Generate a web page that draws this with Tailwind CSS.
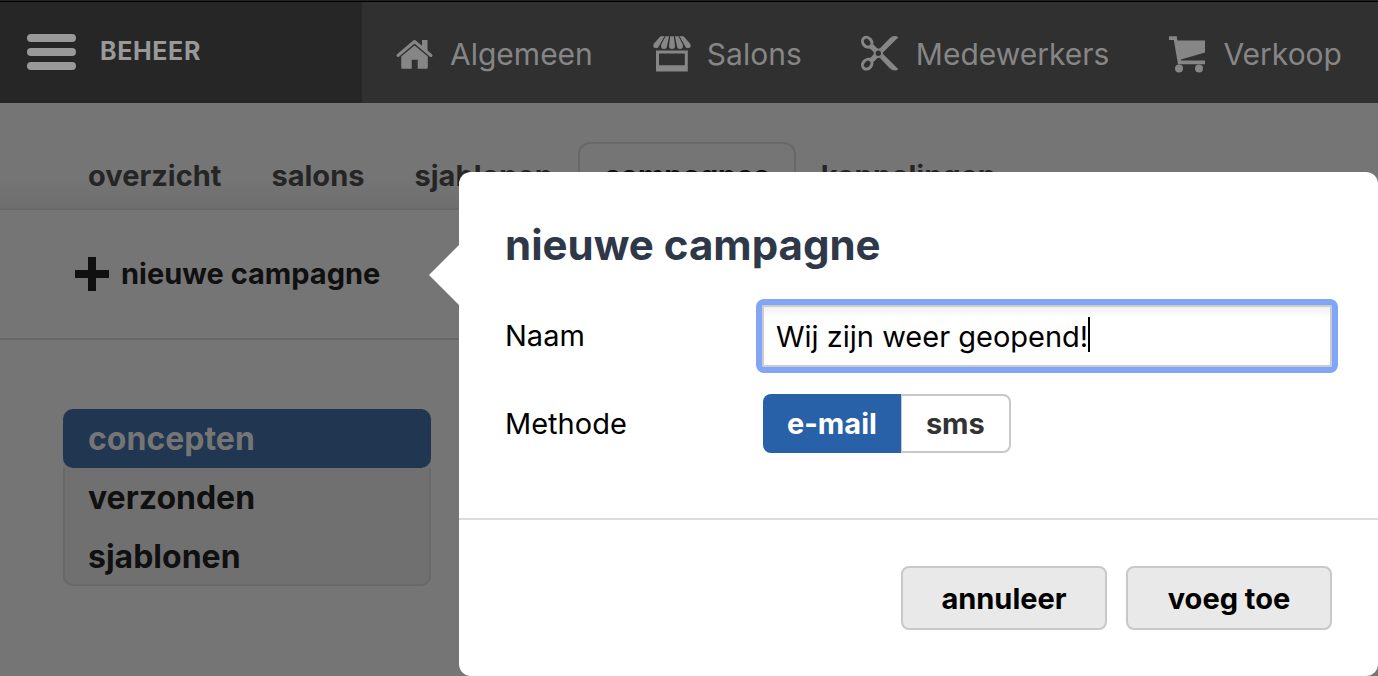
<!DOCTYPE html>
<html lang="nl">
  <head>
    <meta charset="UTF-8" />
    <meta name="viewport" content="width=device-width, initial-scale=1.0" />
    <title>Beheer - campagnes</title>
    <script src="https://cdn.jsdelivr.net/npm/@tailwindcss/browser@4"></script>
  </head>
  <body class="relative min-h-screen overflow-x-hidden bg-[#757575] font-['Inter',sans-serif] text-[#101010]">
    <header class="flex h-[103px] border-t border-[#222222] bg-[#303030] text-[#868686]">
      <div class="flex w-[362px] shrink-0 items-center gap-6 border-t border-black bg-[#262626] pb-[2px] pl-[27px]">
        <button type="button" aria-label="Menu" class="flex flex-col gap-[6px]">
          <span class="h-2 w-[49px] rounded-full bg-[#999999]"></span>
          <span class="h-2 w-[49px] rounded-full bg-[#999999]"></span>
          <span class="h-2 w-[49px] rounded-full bg-[#999999]"></span>
        </button>
        <span class="text-[25px] font-bold tracking-wide text-[#999999]">BEHEER</span>
      </div>
      <nav class="flex grow items-center justify-between border-t border-black pt-1 pr-9 pl-8 text-[30px] whitespace-nowrap">
        <a href="#" class="flex items-center gap-4">
          <svg class="h-10 w-10" viewBox="0 0 40 40" fill="currentColor">
            <path d="M4 20.500 20.500 6.500 37 20.500" fill="none" stroke="currentColor" stroke-width="3" stroke-linecap="round" stroke-linejoin="round" />
            <path d="M28 5h5.500v12L28 12.500z" />
            <path d="M7.200 21.500 20.500 10.500l13.300 11v11a1.200 1.200 0 0 1-1.200 1.200H23.700v-9h-6v9H8.400a1.200 1.200 0 0 1-1.200-1.200z" />
          </svg>
          Algemeen
        </a>
        <a href="#" class="flex items-center gap-4">
          <svg class="h-10 w-10" viewBox="0 0 40 40" fill="currentColor">
            <path d="M9.500 1.200h4L8 11a3 3 0 0 1-5.800 0q0-1.500 1-2.800z" />
            <path d="M14.600 1.200h3.500L16 11a3 3 0 0 1-6 0q0-1 .5-2z" />
            <path d="M19.200 1.200h3.600L24 11a3 3 0 0 1-6 0z" />
            <path d="M27.400 1.200h-3.500L26 11a3 3 0 0 0 6 0q0-1-.5-2z" />
            <path d="M32.500 1.200h-4L34 11a3 3 0 0 0 5.800 0q0-1.500-1-2.800z" />
            <path d="M5 15.500h31.800v21H5zM8 18.500v11.700h25.800V18.500z" fill-rule="evenodd" />
          </svg>
          Salons
        </a>
        <a href="#" class="flex items-center gap-4">
          <svg class="h-10 w-10" viewBox="0 0 40 40" fill="currentColor">
            <g fill="none" stroke="currentColor" stroke-width="3">
              <ellipse cx="7.200" cy="7.200" rx="4.300" ry="5.300" transform="rotate(-40 7.200 7.200)" />
              <ellipse cx="7.200" cy="29.200" rx="4.300" ry="5.300" transform="rotate(40 7.200 29.200)" />
              <circle cx="18.300" cy="18.200" r="3.700" stroke-width="2" />
            </g>
            <path d="M12.500 8.500 18 14l-4 3.500q-2.500-3.500-5.500-4.500z" />
            <path d="M12.500 27.900 18 22.400l-4-3.500q-2.500 3.500-5.500 4.500z" />
            <path d="M19.500 13.800 30 3q4-3.500 8.400-.8L22.500 18q-.4-3.500-3-4.200z" />
            <path d="M19.500 22.600 30 33.400q4 3.500 8.400.8L22.500 18.400q-.4 3.500-3 4.200z" />
          </svg>
          Medewerkers
        </a>
        <a href="#" class="flex items-center gap-4">
          <svg class="h-10 w-10" viewBox="0 0 40 40" fill="currentColor">
            <path d="M2 1.200h7.800l.5 4.300H38v12L14 24.600v.9h24v3.700H11L6.800 4.900H2z" />
            <circle cx="12" cy="33.500" r="4" />
            <circle cx="32" cy="33.500" r="4" />
          </svg>
          Verkoop
        </a>
      </nav>
    </header>

    <nav class="flex h-[107px] items-end border-b-2 border-[#686868] bg-linear-to-b from-[#757575] from-70% to-[#6f6f6f] pl-[63px] text-[29px] font-bold whitespace-nowrap text-[#252525]">
      <a href="#" class="flex h-[65px] items-center px-[25px]">overzicht</a>
      <a href="#" class="flex h-[65px] items-center px-[25px]">salons</a>
      <a href="#" class="flex h-[65px] items-center px-[25px]">sjablonen</a>
      <a href="#" class="flex h-[66px] items-center rounded-t-xl border-2 border-b-0 border-[#686868] px-6 text-[#101010]">campagnes</a>
      <a href="#" class="flex h-[65px] items-center px-[25px]">koppelingen</a>
    </nav>

    <div class="flex h-[130px] items-center border-b-2 border-[#686868] pl-[75px]">
      <button type="button" class="flex items-center gap-3 text-[29px] font-bold">
        <svg class="h-[34px] w-[34px]" viewBox="0 0 34 34" fill="currentColor">
          <path d="M13 0h8v13h13v8H21v13h-8V21H0v-8h13z" />
        </svg>
        nieuwe campagne
      </button>
    </div>

    <ul class="mt-[69px] ml-[63px] w-[368px] rounded-[10px] bg-[#707070] text-[32px] leading-[59px] font-bold">
      <li><a href="#" class="block rounded-[10px] bg-[#203651] px-[25px] text-[#757575]">concepten</a></li>
      <li class="border-x-2 border-[#686868]"><a href="#" class="block px-[23px]">verzonden</a></li>
      <li class="h-[59px] rounded-b-[10px] border-x-2 border-b-2 border-[#686868]"><a href="#" class="block px-[23px]">sjablonen</a></li>
    </ul>

    <!-- popover -->
    <form class="absolute top-[172px] right-0 left-[459px] rounded-xl bg-white text-black">
      <svg class="absolute top-[73px] -left-[30px] h-[60px] w-[31px]" viewBox="0 0 31 60" fill="white"><path d="M31 0v60h-1L0 30 30 0z" /></svg>
      <div class="h-[348px] border-b-2 border-[#dddddd] px-[46px] pt-11">
        <h1 class="text-[42px] leading-[58px] font-bold text-[#2f3848]">nieuwe campagne</h1>
        <div class="mt-[31px] flex items-center text-[29px]">
          <label for="name" class="w-[257px] shrink-0">Naam</label>
          <div class="relative w-full">
            <input id="name" type="text" value="Wij zijn weer geopend!" class="block h-[62px] w-full rounded-xs border-2 border-[#cccccc] px-3 shadow-[inset_0_8px_8px_-4px_#eeeeee] outline-[6px] outline-[#83a5f8]" />
            <span class="absolute top-3 left-[326px] h-[35px] w-[2px] bg-black"></span>
          </div>
        </div>
        <div class="mt-[27px] flex items-center text-[29px]">
          <span id="method" class="w-[258px] shrink-0">Methode</span>
          <div role="group" aria-labelledby="method" class="flex h-[59px] font-bold">
            <button type="button" aria-pressed="true" class="rounded-l-lg bg-[#2861a8] px-6 text-white">e-mail</button>
            <button type="button" aria-pressed="false" class="rounded-r-lg border-2 border-l-1 border-[#c8c8c8] px-6 text-[#333333]">sms</button>
          </div>
        </div>
      </div>
      <div class="flex justify-end gap-[19px] p-[46px] text-[29px] font-bold">
        <button type="button" class="h-16 w-[206px] rounded-lg border-2 border-[#c8c8c8] bg-[#e9e9e9] pt-[2px]">annuleer</button>
        <button type="submit" class="h-16 w-[206px] rounded-lg border-2 border-[#c8c8c8] bg-[#e9e9e9] pt-[2px]">voeg toe</button>
      </div>
    </form>
  </body>
</html>
